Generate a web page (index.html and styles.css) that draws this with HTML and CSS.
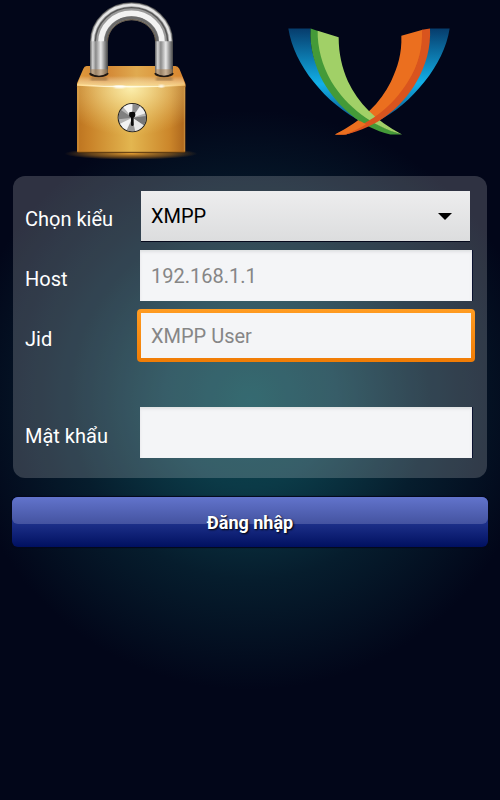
FILE: index.html
```html
<!DOCTYPE html>
<html lang="vi">
<head>
    <meta charset="UTF-8">
    <meta name="viewport" content="width=device-width, initial-scale=1">
    <title>Đăng nhập</title>
    <link rel="stylesheet" href="styles.css">
</head>
<body>
    <!-- lock + XMPP logo -->
    <header class="logos">
        <svg class="lock" viewBox="0 0 426 495" aria-hidden="true">
            <defs>
                <linearGradient id="front" x1="0" x2="1" y1="0" y2="0">
                    <stop offset="0" stop-color="#bd7420"/>
                    <stop offset=".12" stop-color="#c98329"/>
                    <stop offset=".5" stop-color="#e3b650"/>
                    <stop offset=".85" stop-color="#cc872b"/>
                    <stop offset="1" stop-color="#ac651c"/>
                </linearGradient>
                <radialGradient id="shine" cx=".5" cy=".05" r=".7">
                    <stop offset="0" stop-color="#fff7bc" stop-opacity=".85"/>
                    <stop offset="1" stop-color="#f5d77a" stop-opacity="0"/>
                </radialGradient>
                <linearGradient id="top" x1="0" x2="1" y1="0" y2="0">
                    <stop offset="0" stop-color="#e09a3c"/>
                    <stop offset=".25" stop-color="#d28432"/>
                    <stop offset=".55" stop-color="#e0aa50"/>
                    <stop offset="1" stop-color="#d9842c"/>
                </linearGradient>
                <linearGradient id="edge" x1="0" x2="1" y1="0" y2="0">
                    <stop offset="0" stop-color="#ffd98a"/>
                    <stop offset=".4" stop-color="#fffff0"/>
                    <stop offset=".75" stop-color="#fff3c4"/>
                    <stop offset="1" stop-color="#f0b860"/>
                </linearGradient>
                <linearGradient id="fade" x1="0" x2="0" y1="0" y2="1">
                    <stop offset="0" stop-color="#fff" stop-opacity="0"/>
                    <stop offset="1" stop-color="#ffe7a0" stop-opacity=".75"/>
                </linearGradient>
                <linearGradient id="leg" x1="0" x2="1" y1="0" y2="0">
                    <stop offset="0" stop-color="#5c5c5c"/>
                    <stop offset=".15" stop-color="#d4d4d4"/>
                    <stop offset=".32" stop-color="#8a8a8a"/>
                    <stop offset=".6" stop-color="#e8e8e8"/>
                    <stop offset=".82" stop-color="#8d8d8d"/>
                    <stop offset="1" stop-color="#444"/>
                </linearGradient>
                <radialGradient id="glow">
                    <stop offset="0" stop-color="#e09a30"/>
                    <stop offset=".6" stop-color="#a86c1c" stop-opacity=".6"/>
                    <stop offset="1" stop-color="#a86c1c" stop-opacity="0"/>
                </radialGradient>
                <filter id="soft"><feGaussianBlur stdDeviation="3"/></filter>
                <filter id="blend"><feGaussianBlur stdDeviation="1.5"/></filter>
            </defs>
            <ellipse cx="213" cy="461" rx="200" ry="18" fill="url(#glow)"/>
            <!-- body -->
            <path d="M80 198H346Q354 198 358 206L376 250V262H51V250L70 206Q73 198 80 198Z" fill="url(#top)"/>
            <path d="M62 228H366L376 256H51Z" fill="url(#fade)"/>
            <rect x="51" y="256" width="325" height="201" rx="3" fill="url(#front)"/>
            <rect x="51" y="256" width="325" height="201" fill="url(#shine)"/>
            <path d="M51 255Q213 265 376 255" fill="none" stroke="url(#edge)" stroke-width="5"/>
            <ellipse cx="178" cy="260" rx="16" ry="4" fill="#fff" filter="url(#soft)"/>
            <ellipse cx="304" cy="259" rx="8" ry="4" fill="#fff" filter="url(#soft)"/>
            <path d="M54 262V454M373 262V454" stroke="#f2c46a" stroke-width="2" opacity=".6"/>
            <path d="M53 457H374" stroke="#5d3a10" stroke-width="3"/>
            <!-- shackle -->
            <ellipse cx="116" cy="222" rx="28" ry="10" fill="#2d2117"/>
            <ellipse cx="312" cy="222" rx="28" ry="10" fill="#2d2117"/>
            <path d="M92 232H142V242H92ZM288 232H338V242H288Z" fill="#8d6a40" filter="url(#soft)" opacity=".6"/>
            <path d="M117 126A97.5 92 0 0 1 312 126" fill="none" stroke="#555" stroke-width="54"/>
            <path d="M117 126A97.5 92 0 0 1 312 126" fill="none" stroke="#999" stroke-width="50"/>
            <g fill="none" filter="url(#blend)">
                <path d="M98 126A116.5 111 0 0 1 331 126" stroke="#e5e5e5" stroke-width="7"/>
                <path d="M106 126A108.5 103 0 0 1 323 126" stroke="#555" stroke-width="4"/>
                <path d="M123 126A91.5 86 0 0 1 306 126" stroke="#f2f2f2" stroke-width="17"/>
                <path d="M137 126A77.5 73 0 0 1 292 126" stroke="#6a6a6a" stroke-width="8"/>
                <path d="M142 126A72.5 67 0 0 1 287 126" stroke="#625544" stroke-width="3"/>
            </g>
            <path d="M90 124H144V222Q117 234 90 222Z" fill="url(#leg)"/>
            <path d="M285 124H339V222Q312 234 285 222Z" fill="url(#leg)"/>
            <path d="M91 208H143V222Q117 234 91 222ZM286 208H338V222Q312 234 286 222Z" fill="#a87943" opacity=".5"/>
            <path d="M89 220Q117 238 145 220M284 220Q312 238 340 220" fill="none" stroke="#1c1510" stroke-width="4"/>
            <!-- key hole -->
            <circle cx="217" cy="353" r="44" fill="#23201c"/>
            <circle cx="217" cy="353" r="41" fill="#b4b4b4"/>
            <g filter="url(#blend)">
                <path d="M217 353L190 322A41 41 0 0 1 218 312Z" fill="#f5f5f5"/>
                <path d="M217 353L218 312A41 41 0 0 1 240 319Z" fill="#8c8c8c"/>
                <path d="M217 353L240 319A41 41 0 0 1 256 340Z" fill="#eee"/>
                <path d="M217 353L258 348A41 41 0 0 1 251 376Z" fill="#777"/>
                <path d="M217 353L251 376A41 41 0 0 1 225 393Z" fill="#e8e8e8"/>
                <path d="M217 353L225 393A41 41 0 0 1 200 390Z" fill="#999"/>
                <path d="M217 353L200 390A41 41 0 0 1 180 371Z" fill="#f2f2f2"/>
                <path d="M217 353L176 358A41 41 0 0 1 183 330Z" fill="#808080"/>
            </g>
            <circle cx="217" cy="344" r="9" fill="#0a0a0a"/>
            <path d="M208 337H224V349H208ZM213 348H221V376Q217 380 213 376Z" fill="#0a0a0a"/>
        </svg>

        <svg class="xmpp" viewBox="38 38 486 320" aria-hidden="true">
            <defs>
                <linearGradient id="blue" x1="0" x2="0" y1="0" y2="1">
                    <stop offset="0" stop-color="#063c6c"/>
                    <stop offset=".58" stop-color="#12b0e8"/>
                    <stop offset="1" stop-color="#0a4f85"/>
                </linearGradient>
            </defs>
            <path d="M39 39C48 95 75 150 114 198C155 250 205 292 272 326L285 318C225 285 180 248 150 198C118 150 102 95 106 39Z" fill="url(#blue)"/>
            <path d="M523 39C514 95 487 150 448 198C407 250 360 292 300 320L290 310C340 285 385 248 415 198C444 150 465 95 464 39Z" fill="url(#blue)"/>
            <!-- light orange, under the green -->
            <path d="M378 61L442 43C446 95 430 150 402 198C354 275 285 335 212 357H179C262 315 316 262 347 198C367 155 380 115 378 61Z" fill="#eb6f1f"/>
            <path d="M106 39L130 47C128 95 144 150 172 198C218 275 292 330 380 357H345C255 335 188 275 143 198C118 150 102 95 106 39Z" fill="#449a38"/>
            <path d="M127 46L190 65C190 115 200 155 218 198C248 262 300 315 380 357C290 332 215 275 168 198C140 150 126 95 127 46Z" fill="#a1d067"/>
            <!-- dark orange, over the green -->
            <path d="M440 43L464 39C467 95 452 150 424 198C376 282 302 335 212 357H179C280 332 350 275 398 198C430 150 442 95 440 43Z" fill="#d9541e"/>
            <path d="M179 357C210 342 235 330 256 317L272 326C245 342 225 352 205 357Z" fill="#eb6f1f"/>
        </svg>
    </header>

    <form class="login">
        <div class="panel">
            <div class="row">
                <label for="type">Chọn kiểu</label>
                <div class="spinner">
                    <select id="type">
                        <option>XMPP</option>
                    </select>
                </div>
            </div>
            <div class="row">
                <label for="host">Host</label>
                <input type="text" id="host" placeholder="192.168.1.1">
            </div>
            <div class="row">
                <label for="jid">Jid</label>
                <input type="text" id="jid" class="active" placeholder="XMPP User">
            </div>
            <div class="row password">
                <label for="pass">Mật khẩu</label>
                <input type="password" id="pass">
            </div>
        </div>
        <button type="submit" class="btn">Đăng nhập</button>
    </form>
</body>
</html>
```
FILE: styles.css
```css
* {
    box-sizing: border-box;
}

body {
    margin: 0;
    min-height: 100vh;
    padding: 0 12px;
    font-family: Roboto, "Noto Sans", sans-serif;
    font-size: 20px;
    color: #fff;
    background: #020619 radial-gradient(circle 290px at center, #094a52, #0b3a47 30%, #061d2d 62%, #020619) no-repeat;
}

/* logos */
.logos {
    display: grid;
    grid-template-columns: 1fr 1fr;
    justify-items: center;
    padding-bottom: 11px;
}
.lock {
    width: 142px;
    height: 165px;
}
.xmpp {
    width: 162px;
    height: 107px;
    margin-top: 28px;
}

/* form panel */
.panel {
    display: flex;
    flex-direction: column;
    gap: 9px;
    margin: 0 1px 19px;
    padding: 15px 15px 20px 12px;
    border-radius: 12px;
    background: rgba(255, 255, 255, 0.18);
}
.row {
    display: grid;
    grid-template-columns: 115px 1fr;
    align-items: center;
}
.row label {
    padding-top: 6px;
}
.password {
    margin-top: 37px;
}

/* fields */
input,
select {
    width: 100%;
    height: 51px;
    border: 0;
    border-radius: 0;
    outline: 0;
    font: inherit;
    color: #000;
}
input {
    padding: 0 11px;
    background: #f4f5f7;
    box-shadow: inset 0 2px 3px #dfe1e3, 1px 0 #0a1230;
}
input::placeholder {
    color: #868686;
    opacity: 1;
}
.active {
    width: auto;
    height: 53px;
    margin: -1px -3px;
    border: 4px solid transparent;
    border-radius: 4px;
    padding: 0 10px;
    background: linear-gradient(#f4f5f7, #f4f5f7) padding-box, linear-gradient(#ff9c22, #f07c05) border-box;
    box-shadow: none;
}

/* drop-down */
.spinner {
    position: relative;
    padding: 0 2px 0 1px;
}
.spinner select {
    display: block;
    appearance: none;
    height: 50px;
    padding: 0 10px;
    background: linear-gradient(#ededee, #dcddde);
    box-shadow: 0 1px #05091c;
}
.spinner::after {
    content: "";
    position: absolute;
    top: 22px;
    right: 20px;
    border: 7px solid transparent;
    border-top-color: #000;
    border-bottom: 0;
    pointer-events: none;
}

/* login button */
.btn {
    position: relative;
    z-index: 0;
    display: block;
    width: 100%;
    height: 50px;
    padding: 1px 0 0;
    border: 0;
    border-radius: 6px;
    font: bold 18px Roboto, "Noto Sans", sans-serif;
    color: #fff;
    text-shadow: 1px 1px 2px #000;
    background: linear-gradient(#2b43a8, #1c2f88 27px, #001060);
    box-shadow: 0 0 1px 1px #04081c;
}
/* glossy top half */
.btn::before {
    content: "";
    position: absolute;
    z-index: -1;
    top: 0;
    left: 0;
    right: 0;
    height: 27px;
    border-radius: 6px;
    background: linear-gradient(#6274cc, #4453a0);
}
```
